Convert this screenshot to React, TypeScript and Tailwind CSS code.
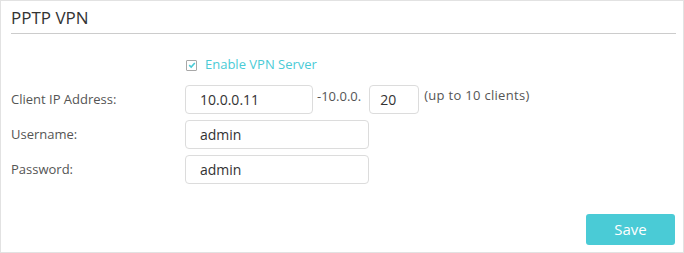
import { useState } from "react";

function Field({ label, value, width = "w-[184px]" }: { label: string; value: string; width?: string }) {
  return (
    <div className="flex items-center h-[29px]">
      <label className="w-[174px] text-[13px] text-[#555]">{label}</label>
      <input
        className={`${width} h-[29px] border border-[#dcdcdc] rounded-[4px] px-[14px] text-[14px] text-[#333] outline-none`}
        defaultValue={value}
      />
    </div>
  );
}

export default function App() {
  const [enabled, setEnabled] = useState(true);
  return (
    <div
      className="w-[684px] h-[253px] border border-[#e2e2e2] bg-white pl-[10px] pr-[7px] flex flex-col"
      style={{ fontFamily: '"Open Sans", "Noto Sans", sans-serif' }}
    >
      <h2 className="h-[33px] border-b border-[#cccccc] pt-[6px] text-[17px] leading-[22px] text-[#333]">PPTP VPN</h2>

      <div className="flex flex-col gap-[6px] pt-[23px]">
        <label className="flex items-center gap-[8px] pl-[175px] h-[16px] mb-[6px] cursor-pointer">
          <span
            className="w-[11px] h-[11px] border border-[#a8a8a8] rounded-[1px] flex items-center justify-center"
            onClick={() => setEnabled(v => !v)}
          >
            {enabled && (
              <svg viewBox="0 0 10 10" className="w-[8px] h-[8px]">
                <path d="M1.5 5.2 L4 7.5 L8.5 2.5" fill="none" stroke="#4acbd6" strokeWidth="2" />
              </svg>
            )}
          </span>
          <span className="text-[13px] text-[#4acbd6]">Enable VPN Server</span>
        </label>

        <div className="flex items-center h-[29px]">
          <label className="w-[174px] text-[13px] text-[#555]">Client IP Address:</label>
          <input
            className="w-[128px] h-[29px] border border-[#dcdcdc] rounded-[4px] px-[14px] text-[14px] text-[#333] outline-none"
            defaultValue="10.0.0.11"
          />
          <span className="self-start pt-[2px] pl-[4px] pr-[8px] text-[13px] text-[#555]">-10.0.0.</span>
          <input
            className="w-[50px] h-[29px] border border-[#dcdcdc] rounded-[4px] px-[10px] text-[14px] text-[#333] outline-none"
            defaultValue="20"
          />
          <span className="self-start pt-[1px] pl-[5px] text-[13px] tracking-[0.3px] text-[#555]">(up to 10 clients)</span>
        </div>

        <Field label="Username:" value="admin" />
        <Field label="Password:" value="admin" />
      </div>

      <div className="flex justify-end pt-[30px] pr-[1px]">
        <button className="w-[89px] h-[31px] bg-[#4acbd6] rounded-[3px] text-white text-[15px]">Save</button>
      </div>
    </div>
  );
}
